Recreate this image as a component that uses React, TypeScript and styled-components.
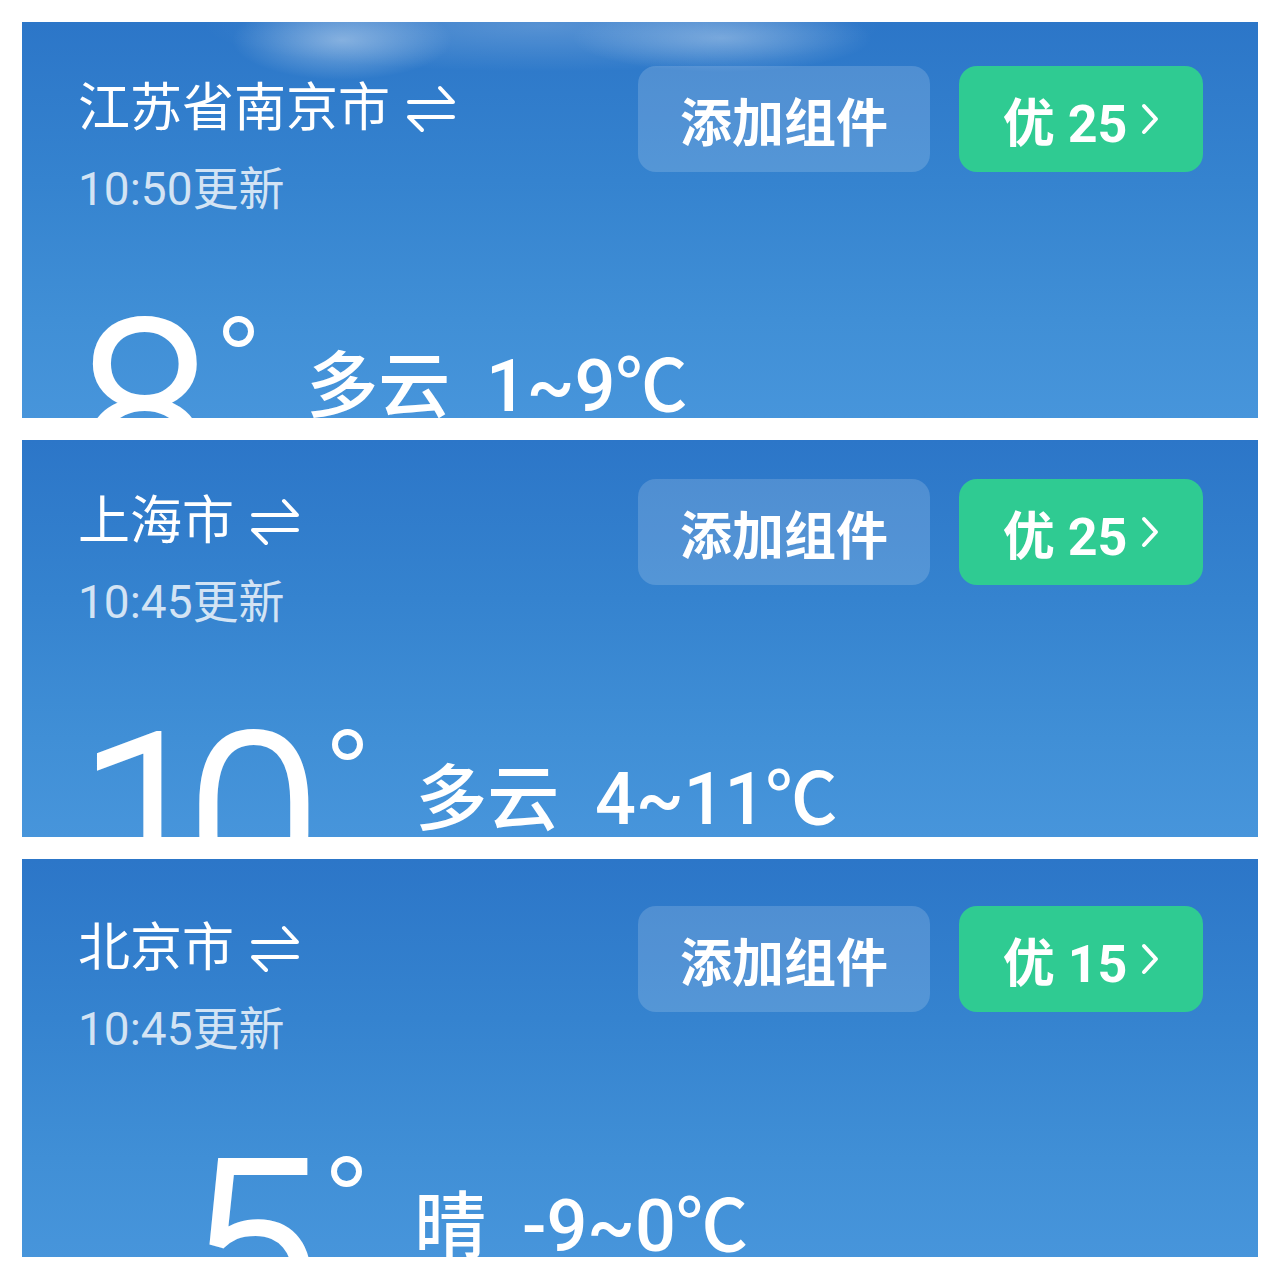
import React from 'react';
import styled, { createGlobalStyle } from 'styled-components';

const GlobalStyle = createGlobalStyle`
  html, body {
    margin: 0;
    padding: 0;
    background: #ffffff;
  }
  body {
    font-family: Roboto, "Noto Sans CJK SC", sans-serif;
  }
`;

const Page = styled.div`
  width: 1280px;
  padding: 22px;
  box-sizing: border-box;
  display: flex;
  flex-direction: column;
  gap: 22px;
`;

const Panel = styled.section<{ $height: number; $top: number; $cloud?: boolean }>`
  height: ${(p) => p.$height}px;
  box-sizing: border-box;
  padding: ${(p) => p.$top}px 55px 0 56px;
  overflow: hidden;
  color: #ffffff;
  background: ${(p) =>
    p.$cloud
      ? `radial-gradient(ellipse 110px 40px at 320px 18px, rgba(255,255,255,0.38), rgba(255,255,255,0) 100%),
         radial-gradient(ellipse 150px 34px at 700px 16px, rgba(255,255,255,0.3), rgba(255,255,255,0) 100%),
         radial-gradient(ellipse 340px 46px at 520px 4px, rgba(255,255,255,0.2), rgba(255,255,255,0) 100%),`
      : ''}
    linear-gradient(180deg, #2c76c8 0%, #3583cf 40%, #408fd6 75%, #4795db 100%);
`;

const Header = styled.div`
  display: flex;
  justify-content: space-between;
  align-items: flex-start;
`;

const Place = styled.div`
  display: flex;
  flex-direction: column;
  padding-top: 13px;
`;

const City = styled.div`
  display: flex;
  align-items: center;
  gap: 17px;
  font-size: 52px;
  line-height: 60px;
  height: 60px;
`;

const Updated = styled.div`
  margin-top: 24px;
  font-size: 46px;
  line-height: 52px;
  color: rgba(255, 255, 255, 0.78);
`;

const Actions = styled.div`
  display: flex;
  gap: 29px;
`;

const Pill = styled.div<{ $green?: boolean }>`
  height: 106px;
  box-sizing: border-box;
  display: flex;
  align-items: center;
  justify-content: center;
  gap: 14px;
  border-radius: 18px;
  font-size: 52px;
  font-weight: 700;
  color: #ffffff;
  background: ${(p) => (p.$green ? '#2fcb92' : 'rgba(255, 255, 255, 0.16)')};
  width: ${(p) => (p.$green ? 244 : 292)}px;
`;

const Now = styled.div<{ $indent: number }>`
  display: flex;
  align-items: flex-start;
  margin-top: 74px;
  padding-left: ${(p) => p.$indent}px;
`;

const Temp = styled.div`
  font-family: Roboto, sans-serif;
  font-size: 240px;
  font-weight: 300;
  line-height: 240px;
  letter-spacing: -24px;
  -webkit-text-stroke: 4px #ffffff;
`;

const Degree = styled.span`
  width: 19px;
  height: 19px;
  margin: 27px 0 0 36px;
  border: 6px solid #ffffff;
  border-radius: 50%;
  flex: none;
`;

const Summary = styled.div`
  margin: 58px 0 0 52px;
  font-size: 72px;
  line-height: 80px;
  font-weight: 500;
  white-space: pre;
`;

const SwapIcon = () => (
  <svg width="48" height="48" viewBox="0 0 48 48" fill="none">
    <path
      d="M2 17 H46 L33 3 M46 32 H2 L15 45"
      stroke="#ffffff"
      strokeWidth="4"
      strokeLinecap="round"
      strokeLinejoin="round"
    />
  </svg>
);

const Chevron = () => (
  <svg width="18" height="32" viewBox="0 0 18 32" fill="none">
    <path
      d="M3 3 L15 16 L3 29"
      stroke="#ffffff"
      strokeWidth="4"
      strokeLinecap="round"
      strokeLinejoin="round"
    />
  </svg>
);

type Forecast = {
  name: string;
  updated: string;
  aqi: number;
  temp: string;
  summary: string;
  height: number;
  top: number;
  indent: number;
  cloud?: boolean;
};

const cities: Forecast[] = [
  { name: '江苏省南京市', updated: '10:50更新', aqi: 25, temp: '8', summary: '多云  1~9℃', height: 396, top: 44, indent: 0, cloud: true },
  { name: '上海市', updated: '10:45更新', aqi: 25, temp: '10', summary: '多云  4~11℃', height: 397, top: 39, indent: 0 },
  { name: '北京市', updated: '10:45更新', aqi: 15, temp: '5', summary: '晴  -9~0℃', height: 398, top: 47, indent: 108 },
];

export default function App() {
  return (
    <>
      <GlobalStyle />
      <Page>
        {cities.map((c) => (
          <Panel key={c.name} $height={c.height} $top={c.top} $cloud={c.cloud}>
            <Header>
              <Place>
                <City>
                  {c.name}
                  <SwapIcon />
                </City>
                <Updated>{c.updated}</Updated>
              </Place>
              <Actions>
                <Pill>添加组件</Pill>
                <Pill $green>
                  优 {c.aqi}
                  <Chevron />
                </Pill>
              </Actions>
            </Header>
            <Now $indent={c.indent}>
              <Temp>{c.temp}</Temp>
              <Degree />
              <Summary>{c.summary}</Summary>
            </Now>
          </Panel>
        ))}
      </Page>
    </>
  );
}
